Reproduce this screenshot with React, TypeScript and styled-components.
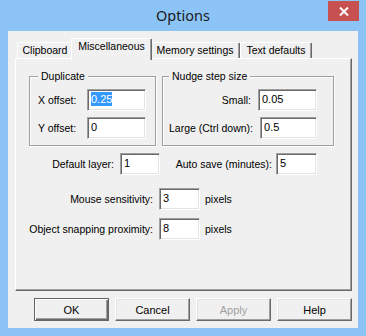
import React from "react";
import styled, { createGlobalStyle, css } from "styled-components";

const Global = createGlobalStyle`
  html, body { margin: 0; padding: 0; background: #8cc4f6; }
  body { font-family: "Liberation Sans", Arial, sans-serif; font-size: 10.5px; color: #000; }
  * { box-sizing: border-box; }
`;

const Window = styled.div`
  width: 366px;
  height: 336px;
  background: #8cc4f6;
  display: flex;
  flex-direction: column;
`;

const TitleBar = styled.div`
  height: 31px;
  display: grid;
  grid-template-columns: 1fr auto 1fr;
  align-items: start;
`;

const Title = styled.div`
  grid-column: 2;
  font-family: "Noto Sans", "Open Sans", sans-serif;
  font-size: 14.5px;
  color: #1a1a1a;
  line-height: 20px;
  margin-top: 5px;
`;

const CloseButton = styled.div`
  grid-column: 3;
  justify-self: end;
  margin-top: 1px;
  margin-right: 7px;
  width: 31px;
  height: 20px;
  background: #c75050;
  display: flex;
  align-items: center;
  justify-content: center;
`;

const Client = styled.div`
  margin: 0 8px;
  height: 297px;
  background: #f0f0f0;
  padding: 7px 6px 7px 7px;
  display: flex;
  flex-direction: column;
`;

const TabRow = styled.div`
  display: flex;
  align-items: flex-end;
  height: 22px;
  margin: 0 0 -2px 2px;
  position: relative;
  z-index: 1;
`;

const Tab = styled.div<{ $w: number; $active?: boolean }>`
  width: ${(p) => p.$w}px;
  height: 16px;
  margin-bottom: 2px;
  background: #f0f0f0;
  border-top: 1px solid #fff;
  border-left: 1px solid #fff;
  border-right: 1px solid #696969;
  box-shadow: inset -1px 0 #a0a0a0;
  border-radius: 2px 2px 0 0;
  display: flex;
  justify-content: center;
  padding-top: 1px;
  line-height: 13px;
  white-space: nowrap;
  ${(p) =>
    p.$active &&
    css`
      height: 22px;
      margin: 0 -2px;
      width: ${p.$w + 4}px;
      padding-top: 1px;
      position: relative;
      z-index: 2;
    `}
`;

const Panel = styled.div`
  height: 233px;
  background: #f0f0f0;
  border-top: 1px solid #fff;
  border-left: 1px solid #fff;
  border-right: 1px solid #696969;
  border-bottom: 1px solid #696969;
  box-shadow: inset -1px -1px #a0a0a0;
  padding: 11px 0 0 13px;
  display: flex;
  flex-direction: column;
`;

const GroupRow = styled.div`
  display: flex;
  gap: 6px;
`;

const Group = styled.fieldset<{ $w: number; $pl: number; $pr: number }>`
  width: ${(p) => p.$w}px;
  margin: 0;
  padding: 6px ${(p) => p.$pr}px 6px ${(p) => p.$pl}px;
  border: 1px solid #a0a0a0;
  box-shadow: inset 1px 1px #fff, 1px 1px #fff;
  min-width: 0;
  display: flex;
  flex-direction: column;
  gap: 6px;
`;

const Legend = styled.legend`
  padding: 0 3px;
  line-height: 13px;
  background: #f0f0f0;
`;

const FieldRow = styled.div<{ $justify?: string; $gap?: number; $mt?: number }>`
  display: flex;
  align-items: center;
  justify-content: ${(p) => p.$justify || "flex-start"};
  gap: ${(p) => p.$gap ?? 0}px;
  margin-top: ${(p) => p.$mt ?? 0}px;
  height: 22px;
`;

const Label = styled.span<{ $w?: number }>`
  white-space: nowrap;
  ${(p) =>
    p.$w !== undefined &&
    css`
      width: ${p.$w}px;
      text-align: right;
    `}
`;

const Field = styled.div<{ $w: number }>`
  width: ${(p) => p.$w}px;
  height: 22px;
  background: #fff;
  border-top: 1px solid #a0a0a0;
  border-left: 1px solid #a0a0a0;
  border-right: 1px solid #fff;
  border-bottom: 1px solid #fff;
  box-shadow: inset 1px 1px #696969, inset -1px -1px #e3e3e3;
  padding: 2px 2px 0 3px;
  line-height: 14px;
  font-size: 11px;
`;

const Selected = styled.span`
  background: #3399ff;
  color: #fff;
  padding: 1px 0;
`;

const Unit = styled.span`
  margin-left: -1px;
`;

const ButtonRow = styled.div`
  display: flex;
  justify-content: flex-end;
  gap: 6px;
  margin-top: 7px;
`;

const Button = styled.div<{ $default?: boolean; $disabled?: boolean }>`
  width: 75px;
  height: 23px;
  background: #f0f0f0;
  display: flex;
  align-items: center;
  justify-content: center;
  font-size: 11px;
  color: ${(p) => (p.$disabled ? "#a0a0a0" : "#000")};
  border-top: 1px solid #fff;
  border-left: 1px solid #fff;
  border-right: 1px solid #696969;
  border-bottom: 1px solid #696969;
  box-shadow: inset -1px -1px #a0a0a0, inset 1px 1px #e3e3e3;
  ${(p) =>
    p.$default &&
    css`
      border: 1px solid #646464;
      box-shadow: inset 1px 1px #fff, inset -1px -1px #696969, inset -2px -2px #a0a0a0;
    `}
`;

export default function App() {
  return (
    <>
      <Global />
      <Window>
        <TitleBar>
          <Title>Options</Title>
          <CloseButton>
            <svg width="10" height="9" viewBox="0 0 10 9">
              <path d="M1 0.5 L9 8.5 M9 0.5 L1 8.5" stroke="#fff" strokeWidth="2" />
            </svg>
          </CloseButton>
        </TitleBar>
        <Client>
          <TabRow>
            <Tab $w={56}>Clipboard</Tab>
            <Tab $w={77} $active>Miscellaneous</Tab>
            <Tab $w={90}>Memory settings</Tab>
            <Tab $w={72}>Text defaults</Tab>
          </TabRow>
          <Panel>
            <GroupRow>
              <Group $w={127} $pl={8} $pr={9}>
                <Legend>Duplicate</Legend>
                <FieldRow $justify="space-between">
                  <Label>X offset:</Label>
                  <Field $w={59}>
                    <Selected>0.25</Selected>
                  </Field>
                </FieldRow>
                <FieldRow $justify="space-between">
                  <Label>Y offset:</Label>
                  <Field $w={59}>0</Field>
                </FieldRow>
              </Group>
              <Group $w={172} $pl={6} $pr={16}>
                <Legend>Nudge step size</Legend>
                <FieldRow $justify="flex-end" $gap={7}>
                  <Label>Small:</Label>
                  <Field $w={59}>0.05</Field>
                </FieldRow>
                <FieldRow $justify="flex-end" $gap={7}>
                  <Label>Large (Ctrl down):</Label>
                  <Field $w={59}>0.5</Field>
                </FieldRow>
              </Group>
            </GroupRow>
            <FieldRow $mt={7}>
              <Label $w={85}>Default layer:</Label>
              <Field $w={40} style={{ marginLeft: 6 }}>1</Field>
              <Label $w={112}>Auto save (minutes):</Label>
              <Field $w={41} style={{ marginLeft: 4 }}>5</Field>
            </FieldRow>
            <FieldRow $mt={13} $gap={6}>
              <Label $w={124}>Mouse sensitivity:</Label>
              <Field $w={41}>3</Field>
              <Unit>pixels</Unit>
            </FieldRow>
            <FieldRow $mt={8} $gap={6}>
              <Label $w={124}>Object snapping proximity:</Label>
              <Field $w={41}>8</Field>
              <Unit>pixels</Unit>
            </FieldRow>
          </Panel>
          <ButtonRow>
            <Button $default>OK</Button>
            <Button>Cancel</Button>
            <Button $disabled>Apply</Button>
            <Button>Help</Button>
          </ButtonRow>
        </Client>
      </Window>
    </>
  );
}
